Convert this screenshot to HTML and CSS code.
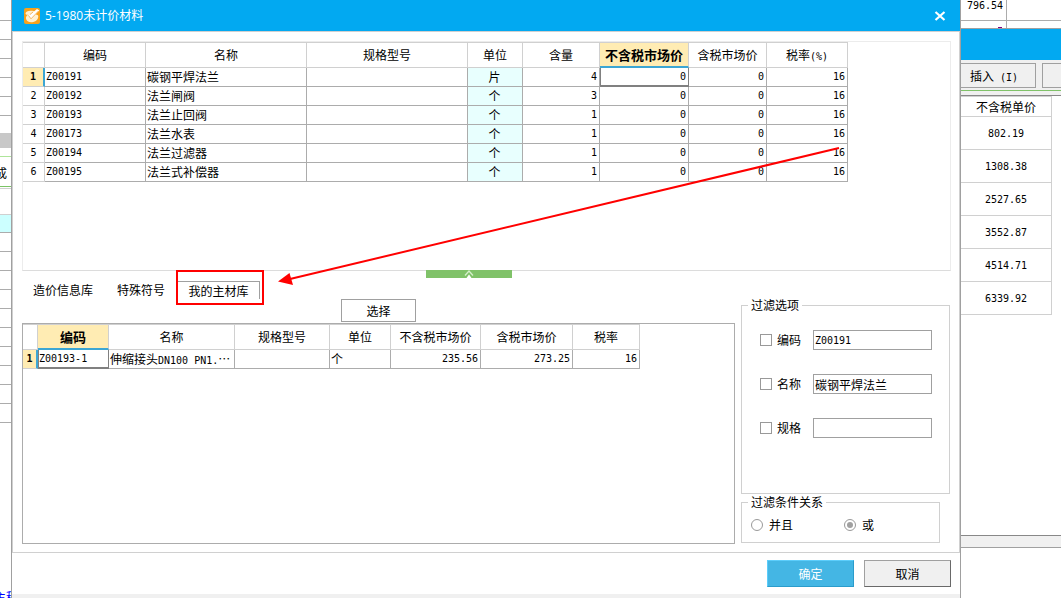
FILE: index.html
```
<!DOCTYPE html>
<html lang="zh-CN">
<head>
<meta charset="utf-8">
<title>5-1980未计价材料</title>
<link rel="stylesheet" href="styles.css">
</head>
<body>
<div class="desktop">
  <div class="back-left" aria-hidden="true">
    <div class="strip strip-first"></div>
    <div class="strip"></div><div class="strip"></div><div class="strip"></div><div class="strip"></div><div class="strip"></div>
    <div class="strip-scroll"></div>
    <div class="strip-tool"><span>成</span></div>
    <div class="strip-head"></div>
    <div class="strip strip-active"></div>
    <div class="strip"></div><div class="strip"></div><div class="strip"></div><div class="strip"></div><div class="strip"></div>
    <div class="strip"></div><div class="strip"></div><div class="strip"></div><div class="strip"></div><div class="strip"></div>
    <div class="strip-foot"><span>主程</span></div>
  </div>

  <main class="dialog">
    <header class="titlebar">
      <svg class="app-icon" viewBox="0 0 16 16" aria-hidden="true">
        <rect width="16" height="16" rx="2" fill="#f9a21b"/>
        <path d="M9.500 3C5 2 1.500 3.500 1.500 5.500c0 1.200 1.500 1.500 2.500 1.200C2 8 1.500 9.500 2.300 11.500c1 2.500 4 3.300 7 2.500 3-.8 5-3 5-5.500 0-1-.6-1.800-1.800-1.800" fill="#fff0d0"/>
        <path d="M4.500 8l2.500 3 8.300-8.500-2.300-1.500z" fill="#fff"/>
        <path d="M4.500 7.500l2.500 3.300L14.500 3M6 6.500L9 4" fill="none" stroke="#f3a33c" stroke-width=".8"/>
      </svg>
      <h1>5-1980未计价材料</h1>
      <button class="close" type="button" aria-label="关闭">
        <svg viewBox="0 0 12 10" aria-hidden="true"><path d="M1.500 1l9 8M10.500 1l-9 8" stroke="#fff" stroke-width="2.200"/></svg>
      </button>
    </header>

    <div class="body">
      <section class="upper">
        <table class="grid">
          <colgroup><col class="w22"><col class="w101"><col class="w161"><col class="w161"><col class="w55"><col class="w77"><col class="w89"><col class="w78"><col class="w81"></colgroup>
          <thead><tr><th></th><th>编码</th><th>名称</th><th>规格型号</th><th>单位</th><th>含量</th><th class="current">不含税市场价</th><th>含税市场价</th><th>税率<span class="num">(%)</span></th></tr></thead>
          <tbody>
            <tr><th class="current">1</th><td class="num">Z00191</td><td>碳钢平焊法兰</td><td></td><td class="unit">片</td><td class="num right">4</td><td class="num right selected">0</td><td class="num right">0</td><td class="num right">16</td></tr>
            <tr><th>2</th><td class="num">Z00192</td><td>法兰闸阀</td><td></td><td class="unit">个</td><td class="num right">3</td><td class="num right">0</td><td class="num right">0</td><td class="num right">16</td></tr>
            <tr><th>3</th><td class="num">Z00193</td><td>法兰止回阀</td><td></td><td class="unit">个</td><td class="num right">1</td><td class="num right">0</td><td class="num right">0</td><td class="num right">16</td></tr>
            <tr><th>4</th><td class="num">Z00173</td><td>法兰水表</td><td></td><td class="unit">个</td><td class="num right">1</td><td class="num right">0</td><td class="num right">0</td><td class="num right">16</td></tr>
            <tr><th>5</th><td class="num">Z00194</td><td>法兰过滤器</td><td></td><td class="unit">个</td><td class="num right">1</td><td class="num right">0</td><td class="num right">0</td><td class="num right">16</td></tr>
            <tr><th>6</th><td class="num">Z00195</td><td>法兰式补偿器</td><td></td><td class="unit">个</td><td class="num right">1</td><td class="num right">0</td><td class="num right">0</td><td class="num right">16</td></tr>
          </tbody>
        </table>
        <button class="splitter" type="button" aria-label="收起">
          <svg viewBox="0 0 10 8" aria-hidden="true"><path d="M1 5.500L5 1l4 4.500" fill="none" stroke="#d5efcb" stroke-width="1.300"/><path d="M2.500 8L5 4.500 7.500 8z" fill="#fff"/></svg>
        </button>
      </section>

      <div class="lower">
        <section class="library">
          <nav class="tabs">
            <button type="button">造价信息库</button>
            <button type="button">特殊符号</button>
            <button type="button" class="active">我的主材库</button>
          </nav>
          <button class="choose" type="button">选择</button>
          <div class="library-list">
            <table class="grid">
              <colgroup><col class="w15"><col class="w71"><col class="w126"><col class="w95"><col class="w61"><col class="w90"><col class="w92"><col class="w67"></colgroup>
              <thead><tr><th></th><th class="current">编码</th><th>名称</th><th>规格型号</th><th>单位</th><th>不含税市场价</th><th>含税市场价</th><th>税率</th></tr></thead>
              <tbody><tr><th class="current">1</th><td class="num selected">Z00193-1</td><td>伸缩接头<span class="num">DN100 PN1.</span>⋯</td><td></td><td>个</td><td class="num right">235.56</td><td class="num right">273.25</td><td class="num right">16</td></tr></tbody>
            </table>
          </div>
        </section>

        <aside class="filters">
          <fieldset class="options">
            <legend>过滤选项</legend>
            <div class="filter"><input type="checkbox" id="by-code"><label for="by-code">编码</label><input class="num" type="text" value="Z00191" aria-label="编码"></div>
            <div class="filter"><input type="checkbox" id="by-name"><label for="by-name">名称</label><input type="text" value="碳钢平焊法兰" aria-label="名称"></div>
            <div class="filter"><input type="checkbox" id="by-spec"><label for="by-spec">规格</label><input type="text" aria-label="规格"></div>
          </fieldset>
          <fieldset class="relation">
            <legend>过滤条件关系</legend>
            <label><input type="radio" name="relation">并且</label>
            <label><input type="radio" name="relation" checked>或</label>
          </fieldset>
        </aside>
      </div>
    </div>

    <footer class="actions">
      <button class="ok" type="button">确定</button>
      <button class="cancel" type="button">取消</button>
    </footer>

    <svg class="marks" viewBox="0 0 948 598" aria-hidden="true">
      <rect x="165" y="271" width="86" height="33" fill="none" stroke="#f00" stroke-width="2"/>
      <path d="M827 148L278 279" stroke="#f00" stroke-width="2"/>
      <path d="M266 281.500L277.500 273 281 285z" fill="#f00"/>
    </svg>
  </main>

  <div class="back-right">
    <div class="sheet-end"><span class="num">796.54</span></div>
    <div class="sheet-cut"><span></span></div>
    <div class="back-title"></div>
    <div class="toolbar"><button type="button">插入<span class="num"> (I)</span></button><button type="button" class="cut" aria-label="更多"></button></div>
    <div class="toolbar-line"></div>
    <table class="prices">
      <thead><tr><th>不含税单价</th></tr></thead>
      <tbody>
        <tr><td class="num">802.19</td></tr>
        <tr><td class="num">1308.38</td></tr>
        <tr><td class="num">2527.65</td></tr>
        <tr><td class="num">3552.87</td></tr>
        <tr><td class="num">4514.71</td></tr>
        <tr><td class="num">6339.92</td></tr>
      </tbody>
    </table>
    <div class="back-status"></div>
    <div class="back-foot"></div>
  </div>
</div>
</body>
</html>
```
FILE: styles.css
```
* { box-sizing: border-box; }
body {
  margin: 0;
  background: #fff;
  color: #000;
  font: 12px/16px "Noto Sans CJK SC", sans-serif;
}
button, input, legend { font: inherit; color: inherit; }
button { padding: 0; border-radius: 0; white-space: nowrap; }
.num { font-family: "DejaVu Sans Mono", monospace; font-size: 10px; }
span.num { white-space: pre; line-height: 10px; }

.desktop {
  display: grid;
  grid-template-columns: 12px minmax(0, 1fr) 100px;
  height: 100vh;
  overflow: hidden;
}

/* window edge on the left */
.back-left { border-right: 1px solid #a0a0a0; overflow: hidden; display: flex; flex-direction: column; }
.strip { flex: none; height: 19px; border-bottom: 1px solid #acacac; }
.strip-first { height: 21px; }
.strip-scroll { flex: none; height: 32px; border-top: 17px solid #fff; background: #c8c8c8; }
.strip-tool { flex: none; margin-top: 8px; height: 31px; border-top: 1px solid #aee59a; border-bottom: 1px solid #7bc466; }
.strip-tool span, .strip-foot span { display: flex; white-space: nowrap; }
.strip-tool span { justify-content: flex-end; margin: 8px 4px 0 0; }
.strip-head { flex: none; height: 27px; margin-top: 1px; border-top: 1px solid #d0d0d0; border-bottom: 1px solid #d0d0d0; }
.strip-active { height: 18px; background: #cff; }
.strip-foot { margin-top: auto; height: 9px; color: #00f; overflow: hidden; }
.strip-foot span { margin-left: -6px; }

/* dialog */
.dialog { position: relative; display: flex; flex-direction: column; border-right: 1px solid #a0a0a0; background: #fff; min-width: 0; }
.titlebar { display: flex; align-items: center; gap: 5px; height: 31px; padding: 0 14px 0 12px; background: #02a9f1; color: #fff; }
.titlebar h1 { flex: 1; margin: 0; font: 12px/16px "Open Sans", "Noto Sans CJK SC", sans-serif; }
.app-icon { width: 16px; height: 16px; }
.close { display: flex; border: 0; background: none; }
.close svg { width: 12px; height: 10px; }
.body { flex: 1; display: flex; flex-direction: column; min-height: 0; padding: 9px 8px 8px 9px; border: 1px solid #d0d0d0; }
.upper { position: relative; height: 230px; border: 1px solid #ececec; border-bottom-color: #dcdcdc; }
.splitter { position: absolute; left: 403px; bottom: -8px; width: 86px; height: 8px; border: 0; background: #80c269; display: flex; justify-content: center; }
.splitter svg { width: 10px; height: 8px; }

.grid { table-layout: fixed; width: 0; border-collapse: separate; border-spacing: 0; }
.grid th, .grid td { padding: 0 2px 0 1px; border: solid #acacac; border-width: 0 1px 1px 0; white-space: nowrap; overflow: hidden; font-weight: normal; }
.grid td { height: 19px; text-align: left; line-height: 18px; }
.grid thead th { height: 26px; border-color: #d0d0d0; border-top-width: 1px; text-align: center; line-height: 24px; padding: 0; }
.grid tbody th { padding: 0; border-color: #d0d0d0; text-align: center; font: 10px/18px "DejaVu Sans Mono", monospace; }
.grid thead th.current { background: #ffecb3; font-weight: bold; font-size: 13px; border-bottom: 2px solid #3ca6d4; line-height: 23px; }
.grid tbody th.current { background: #ffecb3; font-weight: bold; border-right: 2px solid #3ca6d4; }
.grid td.right { text-align: right; }
.grid td.unit { background: #e8fffe; text-align: center; }
.grid td.selected { border-color: #808080; box-shadow: inset 1px 0 #808080, inset 0 -1px #808080; }
.w15 { width: 15px; } .w22 { width: 22px; } .w55 { width: 55px; } .w61 { width: 61px; }
.w67 { width: 67px; } .w71 { width: 71px; } .w77 { width: 77px; } .w78 { width: 78px; }
.w81 { width: 81px; } .w89 { width: 89px; } .w90 { width: 90px; } .w92 { width: 92px; }
.w95 { width: 95px; } .w101 { width: 101px; } .w126 { width: 126px; } .w161 { width: 161px; }

.lower { flex: 1; display: grid; grid-template-columns: minmax(0, 1fr) 209px; gap: 6px; padding-right: 1px; min-height: 0; }
.library { display: flex; flex-direction: column; min-height: 0; }
.tabs { display: flex; height: 28px; padding: 10px 0 0 11px; gap: 12px; }
.tabs button { border: 0; background: none; padding: 0; line-height: 16px; }
.tabs button:first-child { margin-right: 12px; }
.tabs .active { width: 83px; border: solid #a0a0a0; border-width: 1px 1px 0; }
.choose { align-self: center; width: 75px; height: 23px; margin-bottom: 1px; border: 1px solid #a0a0a0; background: #fff; }
.library-list { flex: 1; border: 1px solid #acacac; }

.filters { display: flex; flex-direction: column; padding-top: 26px; }
fieldset { margin: 0; min-width: 0; border: 1px solid #d0d0d0; }
legend { padding: 0 3px; }
.options { height: 197px; padding: 17px 17px 0 18px; }
.options legend { margin-left: -12px; }
.filter { display: flex; align-items: center; height: 20px; margin-bottom: 24px; }
.filter label { margin: 0 12px 0 5px; }
.filter input[type="text"] { flex: 1; min-width: 0; height: 20px; padding: 0 2px 0 1px; border: 1px solid #a0a0a0; border-radius: 0; background: #fff; outline: 0; }
input[type="checkbox"], input[type="radio"] { appearance: none; flex: none; width: 12px; height: 12px; margin: 0; border: 1px solid #999; background: #fff; }
input[type="radio"] { border-radius: 50%; }
input[type="radio"]:checked { background: #a0a0a0; background-clip: content-box; padding: 2px; }
.relation { height: 49px; margin: 0 10px 0 0; padding: 7px 9px 0; display: flex; gap: 51px; }
.relation legend { margin-left: -3px; }
.relation label { display: flex; align-items: center; gap: 6px; height: 16px; }

.actions { display: flex; justify-content: flex-end; gap: 10px; height: 45px; padding: 7px 9px 0 0; border-bottom: 4px solid #f0f0f0; }
.actions button { width: 87px; height: 27px; border: 1px solid; }
.actions .ok { background: #44b6e4; color: #fff; border-color: #5ccdfb #2b9ccb #2b9ccb #5ccdfb; }
.actions .cancel { background: #f0f0f0; border-color: #a0a0a0 #696969 #696969 #a0a0a0; }
.marks { position: absolute; left: 0; top: 0; width: 948px; height: 598px; pointer-events: none; }

/* window behind on the right */
.back-right { display: flex; flex-direction: column; overflow: hidden; }
.sheet-end { height: 21px; border-bottom: 1px solid #acacac; }
.sheet-end span, .sheet-cut span { display: block; width: 46px; border-right: 1px solid #acacac; }
.sheet-end span { height: 20px; padding-left: 6px; line-height: 12px; }
.sheet-cut { height: 8px; border-bottom: 1px solid #a0a0a0; }
.sheet-cut span { height: 7px; background: linear-gradient(#800080, #800080) 37px 6px / 4px 1px no-repeat; }
.back-title { height: 31px; background: #02a9f1; }
.toolbar { display: flex; gap: 6px; height: 30px; padding-top: 3px; background: #f0f0f0; }
.toolbar button { flex: none; width: 75px; height: 25px; padding-right: 8px; border: 1px solid #a0a0a0; border-left: 0; background: #f0f0f0; }
.toolbar .cut { border-left: 1px solid #a0a0a0; }
.toolbar-line { height: 6px; border-top: 1px solid #80c269; border-bottom: 1px solid #888; background: #f0f0f0; }
.prices { width: 91px; border-collapse: separate; border-spacing: 0; text-align: center; }
.prices th, .prices td { padding: 0; border: solid #d0d0d0; border-width: 0 1px 1px 0; font-weight: normal; }
.prices th { height: 21px; border-top-width: 1px; line-height: 18px; }
.prices td { height: 33px; padding-top: 2px; }
.back-status { margin-top: auto; height: 13px; background: #f0f0f0; border-top: 1px solid #888; border-bottom: 1px solid #a0a0a0; }
.back-foot { height: 50px; }
```
